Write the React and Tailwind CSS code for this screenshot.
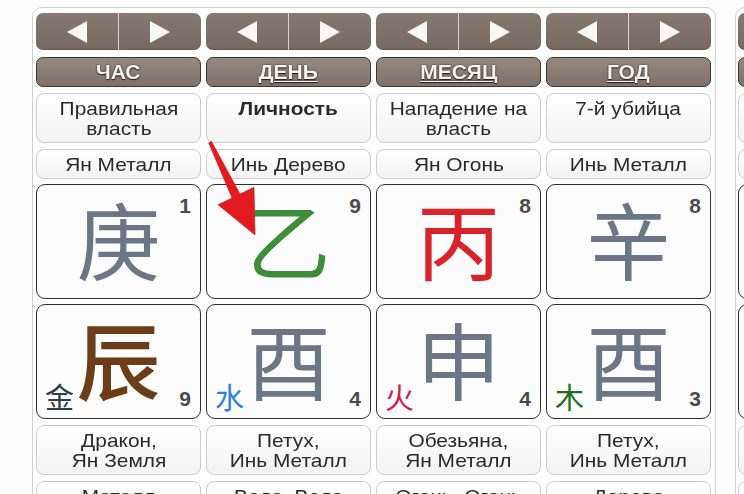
import React from "react";

const cols = [
  {
    head: "ЧАС", link: false,
    t1: ["Правильная", "власть"], t1b: false,
    t2: "Ян Металл",
    stem: { ch: "庚", color: "text-[#6d7686]", n: "1" },
    br: { ch: "辰", color: "text-[#6b3e18]", n: "9", el: "金", elColor: "text-[#2f3d4d]", bold: true },
    t3: ["Дракон,", "Ян Земля"],
    t4: "Металл",
  },
  {
    head: "ДЕНЬ", link: true,
    t1: ["Личность"], t1b: true,
    t2: "Инь Дерево",
    stem: { ch: "乙", color: "text-[#3d8d39]", n: "9" },
    br: { ch: "酉", color: "text-[#6d7686]", n: "4", el: "水", elColor: "text-[#2b7fe0]" },
    t3: ["Петух,", "Инь Металл"],
    t4: "Вода, Вода",
  },
  {
    head: "МЕСЯЦ", link: true,
    t1: ["Нападение на", "власть"], t1b: false,
    t2: "Ян Огонь",
    stem: { ch: "丙", color: "text-[#d9232b]", n: "8" },
    br: { ch: "申", color: "text-[#6d7686]", n: "4", el: "火", elColor: "text-[#d21c48]" },
    t3: ["Обезьяна,", "Ян Металл"],
    t4: "Огонь, Огонь",
  },
  {
    head: "ГОД", link: true,
    t1: ["7-й убийца"], t1b: false,
    t2: "Инь Металл",
    stem: { ch: "辛", color: "text-[#6d7686]", n: "8" },
    br: { ch: "酉", color: "text-[#6d7686]", n: "3", el: "木", elColor: "text-[#1d6f1d]" },
    t3: ["Петух,", "Инь Металл"],
    t4: "Дерево",
  },
];

const Tri = ({ dir }) => (
  <svg width="22" height="24" viewBox="0 0 22 24">
    <polygon
      points={dir === "l" ? "21,1 21,23 1,12" : "1,1 1,23 21,12"}
      fill="#faf8f5"
    />
  </svg>
);

const TextBox = ({ lines, h, bold }) => (
  <div
    className={`${h} rounded-[8px] border border-[#cdcdcd] bg-linear-to-b from-white to-[#f3f3f3] pt-[5px] text-center text-[19px] leading-[20px] text-[#2a2a2a] ${bold ? "font-bold" : ""}`}
  >
    <span className="inline-block [transform:scaleX(1.1)]">
      {lines.map((l, i) => (
        <React.Fragment key={i}>
          {i > 0 && <br />}
          {l}
        </React.Fragment>
      ))}
    </span>
  </div>
);

const Pillar = ({ c }) => (
  <div className="relative h-[115px] rounded-[9px] border border-[#303030] bg-[#fcfcfc] flex items-center justify-center">
    {c && (
      <>
        <span
          className={`font-['Noto_Sans_CJK_SC',sans-serif] text-[84px] leading-none -mt-[8px] ${c.bold ? "font-medium" : ""} ${c.color}`}
        >
          {c.ch}
        </span>
        {c.el ? (
          <>
            <span
              className={`absolute left-[8px] bottom-[7px] font-['Noto_Sans_CJK_SC',sans-serif] text-[29px] leading-none ${c.elColor}`}
            >
              {c.el}
            </span>
            <span className="absolute right-[9px] bottom-[9px] text-[21px] leading-none font-bold text-[#4a4a4a]">
              {c.n}
            </span>
          </>
        ) : (
          <span className="absolute right-[9px] top-[10px] text-[21px] leading-none font-bold text-[#4a4a4a]">
            {c.n}
          </span>
        )}
      </>
    )}
  </div>
);

const Column = ({ c }) => (
  <div className="w-[165px] shrink-0 flex flex-col">
    <div className="h-[37px] flex rounded-[7px] overflow-hidden bg-linear-to-b from-[#867a70] to-[#756960] shadow-[inset_0_-1px_1px_rgba(0,0,0,0.15)]">
      <div className="flex-1 flex items-center justify-center border-r border-[#d9d3cc]">
        {c && <Tri dir="l" />}
      </div>
      <div className="flex-1 flex items-center justify-center">
        {c && <Tri dir="r" />}
      </div>
    </div>
    <div className="mt-[7px] h-[30px] rounded-[7px] border border-[#40362e] bg-linear-to-b from-[#968a80] to-[#7e7268] flex items-center justify-center">
      {c && (
        <span
          className={`inline-block [transform:scaleX(1.05)] text-[20px] leading-none font-bold text-[#f6f3ef] [text-shadow:0_0_2px_#2a211a,0_1px_1px_#2a211a] ${c.link ? "underline decoration-1 underline-offset-2" : ""}`}
        >
          {c.head}
        </span>
      )}
    </div>
    <div className="mt-[6px]">
      <TextBox lines={c ? c.t1 : [""]} h="h-[50px]" bold={c && c.t1b} />
    </div>
    <div className="mt-[6px]">
      <TextBox lines={c ? [c.t2] : [""]} h="h-[30px]" />
    </div>
    <div className="mt-[5px]">
      <Pillar c={c && c.stem} />
    </div>
    <div className="mt-[5px]">
      <Pillar c={c && c.br} />
    </div>
    <div className="mt-[6px]">
      <TextBox lines={c ? c.t3 : [""]} h="h-[50px]" />
    </div>
    <div className="mt-[6px]">
      <TextBox lines={c ? [c.t4] : [""]} h="h-[50px]" />
    </div>
  </div>
);

export default function App() {
  return (
    <div className="relative w-[744px] h-[494px] overflow-hidden bg-[#fcfcfc] font-['Liberation_Sans',Arial,sans-serif]">
      <div className="flex items-start pl-[32px] pt-[7px] gap-[19px]">
        <div className="shrink-0 rounded-[10px] border border-[#d0d0d0] bg-white pl-[3px] pr-[4px] pt-[5px] pb-[6px] flex gap-[5px]">
          {cols.map((c, i) => (
            <Column key={i} c={c} />
          ))}
        </div>
        <div className="shrink-0 rounded-[10px] border border-[#d0d0d0] bg-white pl-[2px] pr-[4px] pt-[5px] pb-[6px] flex gap-[5px]">
          <Column c={null} />
        </div>
      </div>
      <svg
        className="absolute left-0 top-0 pointer-events-none"
        width="744"
        height="494"
        viewBox="0 0 744 494"
      >
        <polygon
          points="211.4,141.3 240,194 254,187.3 255,235 218,204.7 232,198 208.6,142.7"
          fill="#e31b1f"
          stroke="#c8141a"
          strokeWidth="0.6"
          strokeLinejoin="round"
        />
      </svg>
    </div>
  );
}
